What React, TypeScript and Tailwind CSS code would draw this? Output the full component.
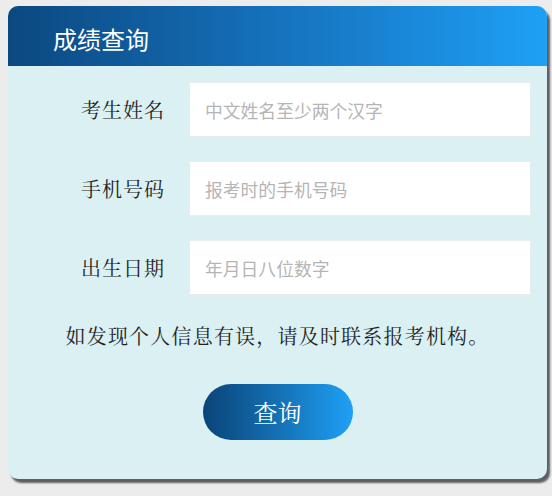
import { useState } from "react";

const fields = [
  { label: "考生姓名", placeholder: "中文姓名至少两个汉字" },
  { label: "手机号码", placeholder: "报考时的手机号码" },
  { label: "出生日期", placeholder: "年月日八位数字" },
];

export default function App() {
  const [values, setValues] = useState<string[]>(["", "", ""]);

  return (
    <div className="min-h-[496px] w-[552px] bg-[#ececec] pt-[6px] pl-[8px]">
      <div className="w-[539px] overflow-hidden rounded-[10px] bg-[#daf0f2] shadow-[3px_4px_2px_rgba(80,80,80,0.9)]">
        {/* Header */}
        <div className="flex h-[60px] items-center bg-gradient-to-r from-[#0b4880] via-[#1672bd] to-[#1ea0f5] pl-[45px]">
          <h1 className="mt-[6px] text-[24px] leading-none text-white [font-family:'Noto_Sans_CJK_SC',sans-serif]">
            成绩查询
          </h1>
        </div>

        {/* Form */}
        <div className="flex flex-col gap-[24px] pt-[16px] pr-[16px]">
          {fields.map((f, i) => (
            <div key={f.label} className="flex items-center gap-[24px]">
              <label className="w-[157px] text-right text-[20px] tracking-[1px] text-[#222] [font-family:'Noto_Serif_CJK_SC','AR_PL_UMing_CN',serif]">
                {f.label}
              </label>
              <input
                value={values[i]}
                onChange={(e) => {
                  const next = [...values];
                  next[i] = e.target.value;
                  setValues(next);
                }}
                placeholder={f.placeholder}
                className="h-[55px] flex-1 border border-[#e6eef0] bg-white px-[15px] text-[17.8px] text-[#333] outline-none placeholder:text-[#b5b5b5] [font-family:'Noto_Sans_CJK_SC',sans-serif]"
              />
            </div>
          ))}
        </div>

        <p className="mt-[30px] text-center text-[20px] leading-[22px] tracking-[1.2px] text-[#222] [font-family:'Noto_Serif_CJK_SC','AR_PL_UMing_CN',serif]">
          如发现个人信息有误，请及时联系报考机构。
        </p>

        <div className="flex justify-center pt-[37px] pb-[39px]">
          <button className="h-[56px] w-[150px] rounded-full bg-gradient-to-r from-[#0a4478] to-[#1fa0f5] text-[24px] text-white [font-family:'Noto_Serif_CJK_SC','AR_PL_UMing_CN',serif]">
            查询
          </button>
        </div>
      </div>
    </div>
  );
}
